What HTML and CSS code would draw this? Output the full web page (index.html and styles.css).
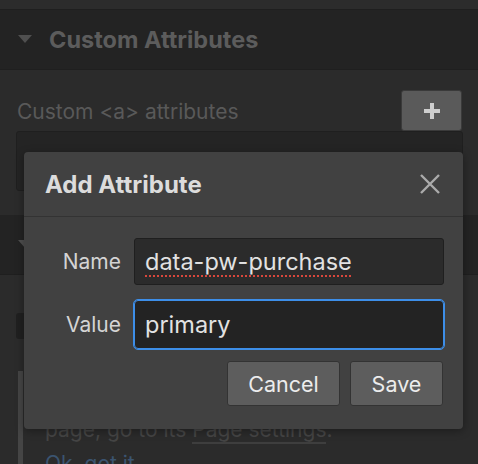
FILE: index.html
```html
<!DOCTYPE html>
<html>
<head>
<meta charset="utf-8">
<link rel="stylesheet" href="styles.css">
</head>
<body>
<div class="panel">
  <div class="topstrip"></div>
  <div class="section-head">
    <svg class="caret" width="14" height="9" viewBox="0 0 14 9"><path d="M0 0 H14 L7 8 Z" fill="#4f4f4f"/></svg>
    <span class="section-title">Custom Attributes</span>
  </div>
  <div class="section-body">
    <div class="attr-row">
      <span class="attr-label">Custom &lt;a&gt; attributes</span>
      <span class="add-btn"><svg width="16" height="16" viewBox="0 0 16 16"><path d="M6 0 H10 V6 H16 V10 H10 V16 H6 V10 H0 V6 H6 Z" fill="#cfcfcf"/></svg></span>
    </div>
    <div class="attr-list"></div>
  </div>
  <div class="section-head second">
    <svg class="caret" width="14" height="9" viewBox="0 0 14 9"><path d="M0 0 H14 L7 8 Z" fill="#4f4f4f"/></svg>
  </div>
  <div class="section-body lower">
    <div class="chk-row"><span class="chk"></span></div>
    <div class="note">
      <p class="note-text">page, go to its <span class="u">Page settings</span>.</p>
      <p class="note-link">Ok, got it</p>
    </div>
  </div>
</div>

<div class="dialog">
  <div class="dialog-head">
    <span class="dialog-title">Add Attribute</span>
    <svg class="close" width="22" height="22" viewBox="0 0 22 22"><path d="M2 2 L20 20 M20 2 L2 20" stroke="#ababab" stroke-width="2.4" fill="none"/></svg>
  </div>
  <div class="dialog-body">
    <label class="field-label">Name</label>
    <div class="input"><span class="spell">data-pw-purchase</span></div>
    <label class="field-label">Value</label>
    <div class="input focused">primary</div>
    <div class="actions">
      <span class="btn cancel">Cancel</span>
      <span class="btn save">Save</span>
    </div>
  </div>
</div>
</body>
</html>
```

FILE: styles.css
```css
* { box-sizing: border-box; }
html, body { margin: 0; padding: 0; }
body {
  width: 478px;
  height: 464px;
  overflow: hidden;
  background: #2b2b2b;
  font-family: Inter, "Noto Sans", sans-serif;
  position: relative;
}
.panel { width: 478px; height: 464px; overflow: hidden; }
.topstrip { height: 10px; background: #2c2c2c; border-bottom: 1px solid #1f1f1f; }
.section-head {
  height: 60px;
  background: #232323;
  border-bottom: 1px solid #1f1f1f;
  display: flex;
  align-items: center;
  padding-left: 18px;
  gap: 17px;
}
.section-title {
  font-weight: 700;
  font-size: 23.5px;
  color: #5c5c5c;
}
.section-body { padding: 20px 15px 24px 16px; }
.attr-row {
  display: flex;
  justify-content: space-between;
  align-items: center;
  padding-left: 1px;
}
.attr-label { font-size: 21px; color: #595959; margin-top: 2px; }
.add-btn {
  width: 61px;
  height: 41px;
  background: #5a5a5a;
  border: 1px solid #3a3a3a;
  border-radius: 3px;
  display: flex;
  align-items: center;
  justify-content: center;
  margin-right: 1px;
}
.attr-list {
  height: 60px;
  background: #242424;
  border: 1px solid #1f1f1f;
  border-radius: 3px;
}
.second { height: 60px; }
.lower { padding: 38px 15px 0 16px; }
.chk-row { height: 58px; }
.chk {
  display: block;
  width: 10px;
  height: 26px;
  background: #202020;
  border-radius: 3px;
}
.note {
  border-left: 5px solid #454545;
  margin-left: 2px;
  padding: 42px 0 0 22px;
  height: 120px;
}
.note p { margin: 0; font-size: 21px; line-height: 34px; }
.note-text { color: #454545; }
.u { border-bottom: 2px solid #3e3e3e; }
.note-link { color: #3b5470; }

.dialog {
  position: absolute;
  left: 24px;
  top: 152px;
  width: 439px;
  height: 277px;
  background: #414141;
  border-radius: 4px;
  box-shadow: 0 2px 8px rgba(0,0,0,0.35);
}
.dialog-head {
  height: 65px;
  border-bottom: 1px solid #333333;
  display: flex;
  align-items: center;
  justify-content: space-between;
  padding: 0 22px 0 21px;
}
.dialog-title { font-weight: 700; font-size: 24px; color: #dcdcdc; }
.dialog-body {
  display: grid;
  grid-template-columns: 1fr 310px;
  column-gap: 13px;
  row-gap: 15px;
  padding: 21px 19px 0 21px;
  align-items: center;
}
.field-label { font-size: 21px; color: #d4d4d4; text-align: right; }
.input {
  height: 47px;
  background: #2b2b2b;
  border: 1px solid #1f1f1f;
  border-radius: 3px;
  padding-left: 10px;
  display: flex;
  align-items: center;
  font-size: 23.5px;
  color: #e2e2e2;
}
.input.focused {
  height: 49px;
  background: #232323;
  border: 1px solid #3d8ee8;
  outline: 1px solid #3d8ee8;
  border-radius: 4px;
}
.spell {
  text-decoration: underline dotted #d9473c;
  text-decoration-thickness: 2px;
  text-underline-offset: 5px;
}
.actions {
  grid-column: 2;
  display: flex;
  justify-content: flex-end;
  gap: 10px;
  margin-top: -3px;
  margin-right: 1px;
}
.btn {
  height: 45px;
  background: #5d5d5d;
  border: 1px solid #333333;
  border-radius: 3px;
  display: flex;
  align-items: center;
  justify-content: center;
  font-size: 21.5px;
  color: #ececec;
}
.cancel { width: 113px; }
.save { width: 93px; }
```
